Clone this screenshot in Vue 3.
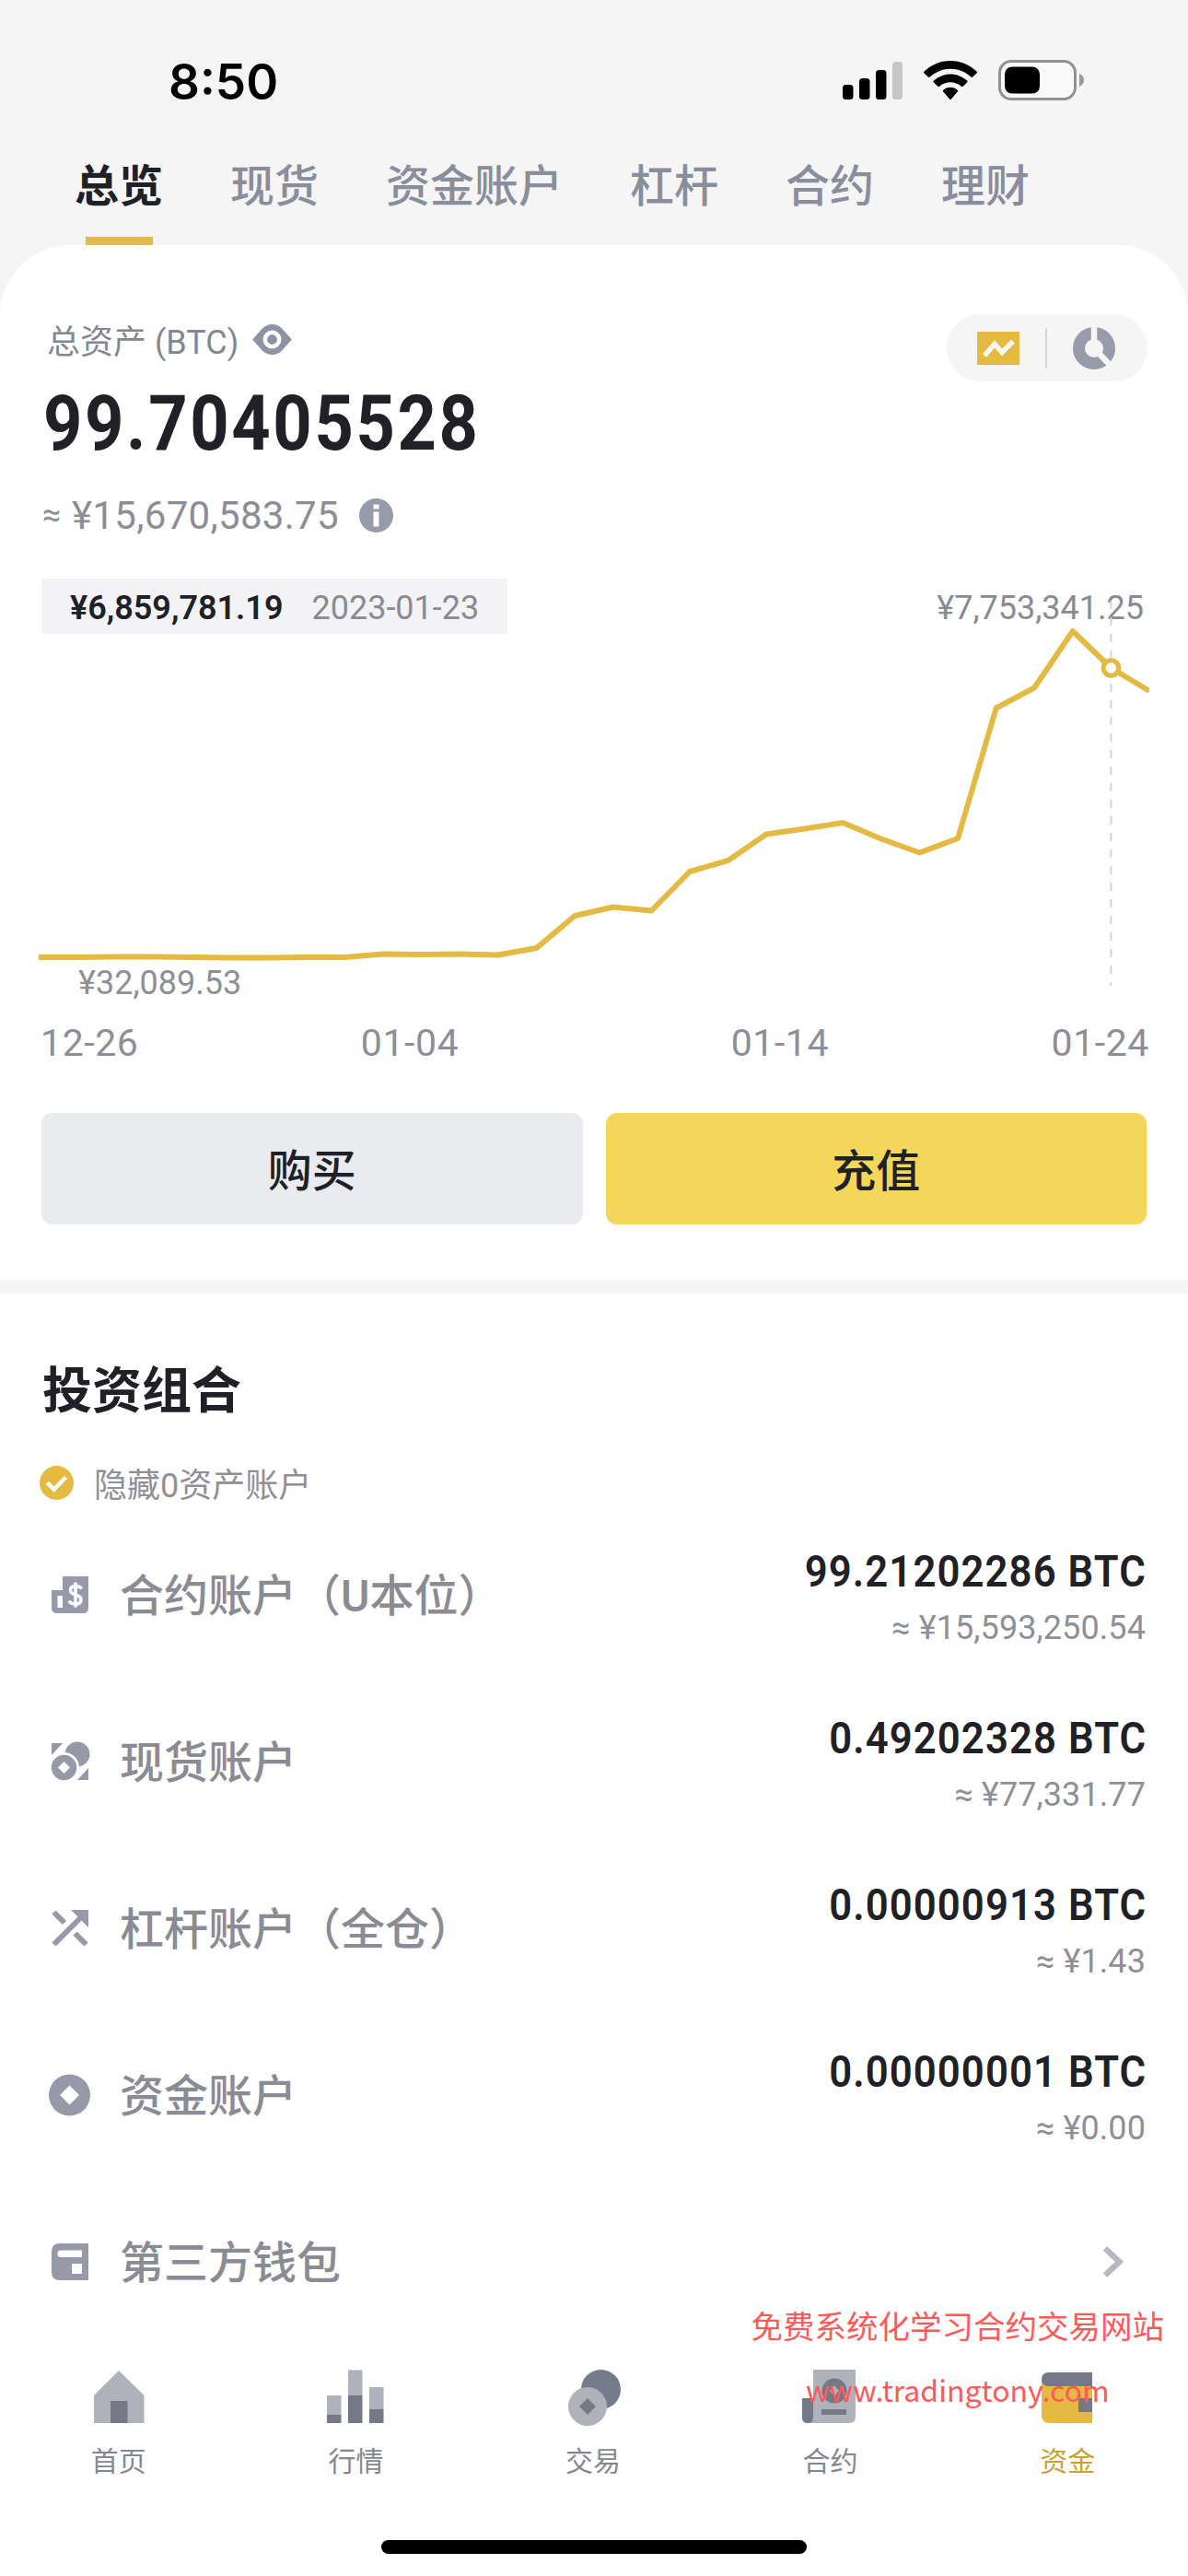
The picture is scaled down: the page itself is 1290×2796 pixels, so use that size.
<template>
  <div class="page">
    <header class="status-bar">
      <span class="time">8:50</span>
      <div class="status-icons">
        <svg width="65" height="42" viewBox="0 0 65 42">
          <rect x="0" y="26" width="11.5" height="16" rx="3.5" />
          <rect x="18" y="19" width="11.5" height="23" rx="3.5" />
          <rect x="36" y="10" width="11.5" height="32" rx="3.5" />
          <rect x="54" y="1" width="11" height="41" rx="3.5" fill="#c6c6c6" />
        </svg>
        <svg width="58" height="42" viewBox="0 0 58 42">
          <path d="M29 0C40 0 50 4.400 57.500 11.500Q58.300 12.500 57.500 13.400L53.200 17.600Q52.300 18.400 51.300 17.500C45.300 12 37.500 8.700 29 8.700S12.700 12 6.700 17.500Q5.700 18.400 4.800 17.600L.5 13.400Q-.3 12.500.5 11.500C8 4.400 18 0 29 0Z" />
          <path d="M29 14.500C36 14.500 42.300 17.200 47 21.600Q48 22.600 47.100 23.500L42.700 27.800Q41.800 28.600 40.800 27.700C37.600 24.900 33.500 23.200 29 23.200S20.400 24.900 17.200 27.700Q16.200 28.600 15.300 27.800L10.900 23.500Q10 22.600 11 21.600C15.700 17.200 22 14.500 29 14.500Z" />
          <path d="M29 28.800C32 28.800 34.700 29.900 36.700 31.700Q37.700 32.700 36.800 33.600L30 41.400Q29 42.400 28 41.400L21.200 33.600Q20.300 32.700 21.300 31.700C23.300 29.900 26 28.800 29 28.800Z" />
        </svg>
        <svg width="94" height="44" viewBox="0 0 94 44">
          <rect x="1.500" y="1.500" width="82" height="41" rx="12.500" fill="#fafafa" stroke="#929292" stroke-width="3" />
          <rect x="7" y="7.500" width="38" height="29" rx="8" />
          <path d="M88 15Q93 17 93 22T88 29Z" fill="#9b9b9b" />
        </svg>
      </div>
    </header>

    <nav class="tabs">
      <a v-for="tab in tabs" :key="tab" class="tab" :class="{ active: tab === currentTab }" @click="currentTab = tab">
        {{ tab }}
      </a>
    </nav>

    <main class="card">
      <!-- 总资产 -->
      <section class="summary">
        <div class="summary-left">
          <div class="asset-title">
            <span>总资产 (BTC)</span>
            <svg width="43" height="33" viewBox="0 0 43 33">
              <path d="M0 16.500L10.500 5C16.500-1.600 26.500-1.600 32.500 5L43 16.500 32.500 28C26.500 34.600 16.500 34.600 10.500 28Z" fill="#8f92a0" />
              <circle cx="21.500" cy="16.500" r="7.700" fill="#8f92a0" stroke="#fff" stroke-width="4.600" />
            </svg>
          </div>
          <div class="asset-total">99.70405528</div>
          <div class="asset-fiat">
            <span class="approx">≈</span>
            <span>¥15,670,583.75</span>
            <svg width="37" height="37" viewBox="0 0 37 37">
              <circle cx="18.500" cy="18.500" r="18.500" fill="#979aa9" />
              <path d="M15.500 6.500h6v5h-6zM15.500 14.500h6v16h-6z" fill="#fff" />
            </svg>
          </div>
        </div>
        <div class="view-switch">
          <svg width="46" height="36" viewBox="0 0 46 36">
            <rect width="46" height="36" fill="#e5ba41" />
            <path d="M8 26L19 13.500 27 22.500 39 10.500" fill="none" stroke="#f8f6f0" stroke-width="5.500" />
          </svg>
          <i class="divider"></i>
          <svg width="46" height="46" viewBox="0 0 46 46">
            <circle cx="23" cy="23" r="16.500" fill="none" stroke="#989ba9" stroke-width="13" />
            <path d="M23 23V-1M23 23L41 42" stroke="#f5f5f6" stroke-width="6.500" />
          </svg>
        </div>
      </section>

      <!-- 资产走势 -->
      <section class="trend">
        <div class="trend-head">
          <div class="trend-tip">
            <b>¥6,859,781.19</b>
            <span>2023-01-23</span>
          </div>
          <span class="trend-max">¥7,753,341.25</span>
        </div>
        <svg class="trend-chart" width="1206" height="426" viewBox="0 0 1206 426">
          <line :x1="marker.x" y1="4" :x2="marker.x" y2="422" stroke="#d3d4da" stroke-width="2" stroke-dasharray="9 9" />
          <polyline :points="linePoints" fill="none" stroke="#e3ba43" stroke-width="6" stroke-linejoin="round" />
          <circle :cx="marker.x" :cy="marker.y" r="8.300" fill="#fff" stroke="#e3ba43" stroke-width="5" />
        </svg>
        <span class="trend-min">¥32,089.53</span>
        <div class="trend-axis">
          <span v-for="d in dates" :key="d">{{ d }}</span>
        </div>
      </section>

      <section class="actions">
        <button class="btn">购买</button>
        <button class="btn primary">充值</button>
      </section>

      <div class="band"></div>

      <!-- 投资组合 -->
      <section class="portfolio">
        <h2>投资组合</h2>
        <label class="hide-zero">
          <svg width="37" height="37" viewBox="0 0 37 37">
            <circle cx="18.500" cy="18.500" r="18.500" fill="#e5ba41" />
            <path d="M8.500 18.500L15.500 25.500 28.500 12.500" fill="none" stroke="#fff" stroke-width="4.500" />
          </svg>
          <span>隐藏0资产账户</span>
        </label>
        <ul class="accounts">
          <li v-for="item in accounts" :key="item.name" class="account">
            <svg class="account-icon" width="46" height="46" viewBox="0 0 46 46" fill="#9799a8">
              <template v-if="item.icon === 'futures'">
                <path d="M15 3H43V37Q43 43 37 43H9Q3 43 3 37V18H15Z" />
                <path d="M9.500 24H15V37H9.500Z" fill="#fff" />
                <path d="M35.500 16.500Q34 13.500 29 13.500 23.500 13.500 23.500 18 23.500 21.500 29 23 35 24.500 35 28.500 35 33 29 33 23.500 33 22 29.500M29 9.500V36.500" fill="none" stroke="#fff" stroke-width="3.600" />
              </template>
              <template v-else-if="item.icon === 'spot'">
                <path d="M3 3H15L3 16ZM43 43H31L43 30Z" />
                <circle cx="31" cy="15" r="13.500" />
                <circle cx="16.500" cy="29.500" r="16.500" fill="#fff" />
                <circle cx="16.500" cy="29.500" r="13.700" />
                <path d="M16.500 23L23 29.500 16.500 36 10 29.500Z" fill="#fff" />
              </template>
              <template v-else-if="item.icon === 'margin'">
                <path d="M24 3H43V22Z" />
                <path d="M5.500 40.500L38 8M5.500 5.500L17 17M28.500 28.500L40.500 40.500" fill="none" stroke="#9799a8" stroke-width="6" />
              </template>
              <template v-else-if="item.icon === 'funding'">
                <circle cx="22.500" cy="23" r="22.500" />
                <path d="M22.500 12.500L33 23 22.500 33.500 12 23Z" fill="#fff" />
              </template>
              <template v-else>
                <path d="M12 3H43V43H12Q3 43 3 34V12Q3 3 12 3Z" />
                <path d="M13 10.500H36V18H13Q9.500 18 9.500 14.200T13 10.500ZM25 25H36V36H25Z" fill="#fff" />
              </template>
            </svg>
            <span class="account-name">{{ item.name }}</span>
            <div v-if="item.amount" class="account-value">
              <span class="amount">{{ item.amount }} BTC</span>
              <span class="fiat">≈ {{ item.fiat }}</span>
            </div>
            <svg v-else class="arrow" width="24" height="34" viewBox="0 0 24 34">
              <path d="M3 2.500L18.500 17 3 31.500" fill="none" stroke="#b7b8c4" stroke-width="6.500" />
            </svg>
          </li>
        </ul>
      </section>
    </main>

    <footer class="tabbar">
      <a v-for="item in navs" :key="item.name" class="nav" :class="{ active: item.icon === 'wallet' }">
        <svg width="62" height="62" viewBox="0 0 62 62" fill="#afb1bb">
          <template v-if="item.icon === 'home'">
            <path d="M31 2L58.500 29V59H4V29Z" />
            <path d="M22 35H40.500V59H22Z" fill="#747887" />
          </template>
          <template v-else-if="item.icon === 'market'">
            <path d="M0 29H15.500V50H0ZM23 1.500H38.500V29H23ZM46 20H61.500V44H46Z" />
            <path d="M0 50H15.500V59H0ZM23 29H38.500V59H23ZM46 44H61.500V59H46Z" fill="#747887" />
          </template>
          <template v-else-if="item.icon === 'trade'">
            <circle cx="39.500" cy="22.500" r="21.500" fill="#747b8a" />
            <circle cx="25" cy="41" r="21" />
            <path d="M25 32L34 41 25 50 16 41Z" fill="#747887" />
          </template>
          <template v-else-if="item.icon === 'futures'">
            <path d="M12 1H58V52Q58 59 51 59H6Q12 57 12 52Z" />
            <path d="M0 32H12V53Q12 59 6 59T0 53Z" fill="#747887" />
            <circle cx="35" cy="24" r="13.500" fill="#747887" />
            <path d="M35 18L40 24 35 30 30 24Z" />
            <path d="M21 44H48V50H21Z" fill="#747887" />
          </template>
          <template v-else>
            <path d="M3 12H58V59H12Q3 59 3 50Z" fill="#e6b942" />
            <path d="M11 4H58V19H11Q3 19 3 11.500T11 4ZM43 32H58V47H43Z" fill="#747887" />
          </template>
        </svg>
        <span>{{ item.name }}</span>
      </a>
    </footer>
    <div class="home-indicator"></div>

    <div class="promo">
      <p>免费系统化学习合约交易网站</p>
      <p class="promo-url">www.tradingtony.com</p>
    </div>
  </div>
</template>

<script setup>
import { computed, ref } from 'vue'

const tabs = ['总览', '现货', '资金账户', '杠杆', '合约', '理财']
const currentTab = ref('总览')

// 近30天走势
const trend = [
  391, 391, 390.5, 390.5, 391, 391.5, 391.5, 391, 391, 387.5, 388, 387.5, 388.5, 381, 346, 336.5, 340.5, 298, 286,
  257.5, 251.5, 245, 262.5, 277.5, 262, 120.5, 98.5, 37, 77, 102,
]
const dates = ['12-26', '01-04', '01-14', '01-24']

const step = 1206 / (trend.length - 1)
const linePoints = computed(() => trend.map((y, i) => `${(i * step).toFixed(1)},${y}`).join(' '))
const marker = computed(() => ({ x: 28 * step, y: trend[28] }))

const accounts = [
  { name: '合约账户（U本位）', icon: 'futures', amount: '99.21202286', fiat: '¥15,593,250.54' },
  { name: '现货账户', icon: 'spot', amount: '0.49202328', fiat: '¥77,331.77' },
  { name: '杠杆账户（全仓）', icon: 'margin', amount: '0.00000913', fiat: '¥1.43' },
  { name: '资金账户', icon: 'funding', amount: '0.00000001', fiat: '¥0.00' },
  { name: '第三方钱包', icon: 'third' },
]

const navs = [
  { name: '首页', icon: 'home' },
  { name: '行情', icon: 'market' },
  { name: '交易', icon: 'trade' },
  { name: '合约', icon: 'futures' },
  { name: '资金', icon: 'wallet' },
]
</script>

<style>
body {
  margin: 0;
  background: #fff;
}
</style>

<style scoped>
.page {
  position: relative;
  width: 1290px;
  height: 2796px;
  overflow: hidden;
  background: #f5f5f5;
  color: #202127;
  font-family: Roboto, 'Noto Sans CJK SC', sans-serif;
  box-sizing: border-box;
}

.page svg {
  display: block;
  flex: none;
}

.status-bar {
  display: flex;
  justify-content: space-between;
  align-items: center;
  height: 174px;
  padding: 0 112px 0 183px;
  box-sizing: border-box;
}

.time {
  padding-top: 3px;
  font: 600 53px/60px Inter, sans-serif;
  color: #000;
}

.status-icons {
  display: flex;
  align-items: center;
  gap: 23px;
}

.tabs {
  display: flex;
  gap: 73px;
  height: 92px;
  padding-left: 81px;
}

.tab {
  display: flex;
  flex-direction: column;
  align-items: center;
  justify-content: space-between;
  padding-top: 2px;
  font-size: 48px;
  line-height: 54px;
  font-weight: 500;
  color: #8a8d9b;
}

.tab.active {
  color: #202127;
  font-weight: 700;
}

.tab.active::after {
  content: '';
  width: 73px;
  height: 9px;
  background: #e3ba43;
}

.card {
  height: 2279px;
  border-radius: 76px 76px 0 0;
  background: #fff;
}

.summary {
  display: flex;
  justify-content: space-between;
  height: 362px;
  padding: 75px 44px 0 46px;
  box-sizing: border-box;
}

.asset-title {
  display: flex;
  align-items: center;
  gap: 15px;
  height: 54px;
  padding-left: 5px;
  font-size: 36px;
  color: #85878f;
}

/* 数字字体偏窄，横向压缩 */
.asset-total {
  width: 500px;
  height: 128px;
  margin-left: 1px;
  line-height: 129px;
  font-size: 84px;
  font-weight: 700;
  letter-spacing: 3px;
  white-space: nowrap;
  transform: scaleX(0.88);
  transform-origin: left center;
}

.asset-fiat {
  display: flex;
  align-items: center;
  height: 72px;
  font-size: 42px;
  letter-spacing: 0.3px;
  color: #8d8e94;
}

.approx {
  width: 32px;
  font-size: 36px;
}

.asset-fiat svg {
  margin-left: 22px;
}

.view-switch {
  display: flex;
  align-items: center;
  justify-content: space-between;
  width: 218px;
  height: 73px;
  padding: 0 35px 0 33px;
  border-radius: 37px;
  background: #f5f5f6;
  box-sizing: border-box;
}

.divider {
  width: 2px;
  height: 44px;
  background: #d6d7dc;
}

.trend {
  height: 580px;
  padding: 0 42px;
}

.trend-head {
  display: flex;
  justify-content: space-between;
  align-items: center;
  height: 60px;
  padding: 0 6px 0 3px;
  font-size: 36px;
  color: #8a8b92;
}

.trend-tip {
  display: flex;
  align-items: center;
  gap: 31px;
  width: 506px;
  height: 60px;
  padding: 3px 0 0 31px;
  background: #f3f3f6;
  box-sizing: border-box;
}

.trend-tip b {
  font-weight: 600;
  color: #202127;
}

.trend-max {
  padding-top: 3px;
}

.trend-chart {
  margin-top: -40px;
}

.trend-min {
  display: block;
  margin: -28px 0 0 43px;
  height: 42px;
  line-height: 42px;
  font-size: 36px;
  color: #8d9096;
}

.trend-axis {
  display: flex;
  justify-content: space-between;
  margin-top: 19px;
  padding-left: 2px;
  height: 50px;
  line-height: 50px;
  font-size: 41px;
  letter-spacing: 0.6px;
  color: #8c8f98;
}

/* 第二、三个刻度间隔更宽 */
.trend-axis span:nth-child(2) {
  margin-right: 54px;
}

.actions {
  display: flex;
  gap: 25px;
  height: 181px;
  padding: 0 45px;
}

.btn {
  flex: 1;
  height: 121px;
  padding: 0 0 4px;
  border: 0;
  border-radius: 12px;
  background: #eaebef;
  color: #202127;
  font: 500 48px 'Noto Sans CJK SC', sans-serif;
  cursor: pointer;
}

.btn.primary {
  background: #f4d65b;
}

.band {
  height: 15px;
  background: #f5f5f5;
}

.portfolio {
  padding: 67px 46px 0 43px;
}

h2 {
  margin: 0 0 0 3px;
  font-size: 54px;
  line-height: 80px;
  font-weight: 700;
}

.hide-zero {
  display: flex;
  align-items: center;
  gap: 22px;
  height: 50px;
  margin-top: 33px;
  font-size: 36px;
  color: #8f9096;
}

.accounts {
  margin: 6px 0 0;
  padding: 0 0 0 10px;
  list-style: none;
}

.account {
  display: flex;
  align-items: center;
  height: 181px;
}

.account-name {
  flex: 1;
  margin-left: 31px;
  padding-top: 4px;
  font-size: 48px;
  line-height: 60px;
  font-weight: 500;
  color: #8a8b93;
}

.account-value {
  display: flex;
  flex-direction: column;
  align-items: flex-end;
  gap: 6px;
  padding-top: 6px;
}

.amount {
  font-size: 48px;
  line-height: 60px;
  font-weight: 600;
  letter-spacing: 1.2px;
  margin-right: -1px;
  transform: scaleX(0.91);
  transform-origin: right center;
}

.fiat {
  font-size: 36px;
  line-height: 50px;
  letter-spacing: 0.1px;
  color: #8f9096;
}

.arrow {
  margin-right: 23px;
}

.tabbar {
  display: flex;
  height: 212px;
  padding-right: 2px;
  background: #fff;
}

.nav {
  display: flex;
  flex: 1;
  flex-direction: column;
  align-items: center;
  padding-top: 26px;
  font-size: 30px;
  line-height: 40px;
  color: #85878f;
}

.nav span {
  margin-top: 19px;
}

.nav.active {
  color: #cba136;
}

.home-indicator {
  height: 39px;
  background: #fff;
}

.home-indicator::before {
  content: '';
  display: block;
  width: 462px;
  height: 15px;
  margin: 0 auto;
  border-radius: 8px;
  background: #000;
}

.promo {
  position: absolute;
  right: 26px;
  top: 2488px;
  font: 34.5px/70px 'Noto Sans CJK SC', sans-serif;
  color: #ff5a5a;
  text-align: center;
}

.promo p {
  margin: 0;
}

.promo .promo-url {
  font-size: 32px;
}
</style>
